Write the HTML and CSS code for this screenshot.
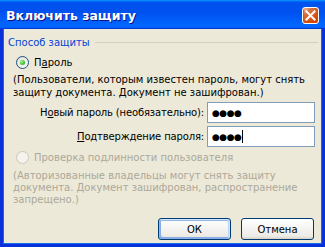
FILE: index.html
```html
<!DOCTYPE html>
<html lang="ru">
  <head>
    <meta charset="UTF-8" />
    <title>Включить защиту</title>
    <link rel="stylesheet" href="styles.css">
  </head>
  <body>
    <div class="window">
      <div class="title-bar">
        <span class="title-text">Включить защиту</span>
        <span class="close-btn" aria-label="Закрыть">
          <svg width="11" height="11" viewBox="0 0 11 11">
            <path d="M1.5 1.5 L9.5 9.5 M9.5 1.5 L1.5 9.5" stroke="#fff" stroke-width="2" stroke-linecap="square" />
          </svg>
        </span>
      </div>

      <div class="window-body">
        <div class="group-head">
          <span>Способ защиты</span>
          <span class="group-line"></span>
        </div>

        <div class="option">
          <div class="radio-row">
            <span class="radio checked"></span>
            <span>П<u>а</u>роль</span>
          </div>
          <p class="note">(Пользователи, которым известен пароль, могут снять<br>защиту документа. Документ не зашифрован.)</p>

          <div class="field-row">
            <label for="newPass">Н<u>о</u>вый пароль (необязательно):</label>
            <div class="input" id="newPass">●●●●</div>
          </div>
          <div class="field-row">
            <label for="confirmPass"><u>П</u>одтверждение пароля:</label>
            <div class="input" id="confirmPass">●●●●<span class="caret"></span></div>
          </div>
        </div>

        <div class="option disabled">
          <div class="radio-row">
            <span class="radio"></span>
            <span>Проверка подлинности пользователя</span>
          </div>
          <p class="note small">(Авторизованные владельцы могут снять защиту<br>документа. Документ зашифрован, распространение<br>запрещено.)</p>
        </div>

        <div class="actions">
          <button class="btn default">ОК</button>
          <button class="btn">Отмена</button>
        </div>
      </div>
    </div>
  </body>
</html>
```

FILE: styles.css
```css
/* Base */
* {
  box-sizing: border-box;
}
body {
  margin: 0;
  font-family: "DejaVu Sans", Verdana, sans-serif;
  font-size: 10px;
  color: #000;
  background: #fff;
}

/* Window frame */
.window {
  width: 325px;
  height: 247px;
  display: flex;
  flex-direction: column;
}
.title-bar {
  height: 29px;
  flex: none;
  display: flex;
  align-items: center;
  justify-content: space-between;
  padding: 0 6px 0 6px;
  background: linear-gradient(
    180deg,
    #0997ff 0%,
    #0053ee 8%,
    #0050ee 40%,
    #0066ff 88%,
    #0066ff 93%,
    #005bff 95%,
    #003dd7 96%,
    #003dd7 100%
  );
}
.title-text {
  color: #fff;
  font-weight: 700;
  font-size: 12.5px;
  text-shadow: 1px 1px #0f1089;
  padding-top: 1px;
}
.close-btn {
  width: 17px;
  height: 17px;
  margin-top: 1px;
  border: 1px solid #fff;
  border-radius: 3px;
  display: flex;
  align-items: center;
  justify-content: center;
  background: radial-gradient(circle at 90% 90%, #cc4600 0%, #dc6527 55%, #cd7546 70%, #ffccb2 90%, #fff 100%);
  box-shadow: inset 0 -1px 2px 1px #da4600;
}

.window-body {
  flex: 1;
  background: #ece9d8;
  border: 3px solid #0831d9;
  border-top: none;
  box-shadow: inset 1px 0 #166aee, inset -1px 0 #166aee, inset 0 -1px #166aee;
  padding: 7px 0 0 5px;
  display: flex;
  flex-direction: column;
}

/* Group heading */
.group-head {
  display: flex;
  align-items: center;
  gap: 5px;
  height: 13px;
  line-height: 13px;
  color: #0046d5;
  padding-right: 4px;
}
.group-line {
  flex: 1;
  height: 1px;
  background: #d0d0bf;
}

/* Options */
.option {
  padding-left: 8px;
}
.radio-row {
  display: flex;
  align-items: center;
  gap: 5px;
  height: 13px;
  margin-top: 7px;
}
.radio {
  width: 13px;
  height: 13px;
  border-radius: 50%;
  border: 1px solid #1c5180;
  background: linear-gradient(135deg, #dcdcd7, #fff);
  display: flex;
  align-items: center;
  justify-content: center;
}
.radio.checked::after {
  content: "";
  width: 5px;
  height: 5px;
  border-radius: 50%;
  background: radial-gradient(circle at 35% 35%, #b6f7a7 0%, #55d33f 40%, #21a121 100%);
}
.note {
  margin: 4px 0 0 -3px;
  line-height: 13px;
  white-space: nowrap;
}
.note.small {
  line-height: 12px;
  margin-top: 6px;
}

/* Password fields */
.field-row {
  display: flex;
  align-items: center;
  justify-content: flex-end;
  gap: 3px;
  padding-right: 7px;
  margin-top: 3px;
}
.field-row:first-of-type {
  margin-top: 2px;
}
.field-row label {
  letter-spacing: -0.15px;
}
.input {
  width: 108px;
  height: 21px;
  border: 1px solid #7f9db9;
  background: #fff;
  padding-left: 4px;
  display: flex;
  align-items: center;
  font-size: 9px;
  letter-spacing: -0.5px;
}
.caret {
  width: 1px;
  height: 13px;
  background: #000;
  margin-left: 1px;
}

/* Disabled option */
.disabled {
  color: #aca899;
}
.disabled .radio-row {
  margin-top: 4px;
}
.disabled .radio {
  border-color: #cac8bb;
  background: #f4f3ee;
}

/* Buttons */
.actions {
  display: flex;
  justify-content: flex-end;
  gap: 10px;
  padding-right: 8px;
  margin-top: 12px;
}
.btn {
  width: 73px;
  height: 22px;
  font-family: inherit;
  font-size: 10px;
  color: #000;
  border: 1px solid #003c74;
  border-radius: 3px;
  background: linear-gradient(180deg, #fff, #ecebe6 86%, #d6d0c5);
  padding: 0;
}
.btn.default {
  box-shadow: inset -1px 1px #cee7ff, inset 1px 2px #98b8ea, inset -2px 2px #bcd4f6, inset 1px -1px #89ade4, inset 2px -2px #89ade4;
}
```
